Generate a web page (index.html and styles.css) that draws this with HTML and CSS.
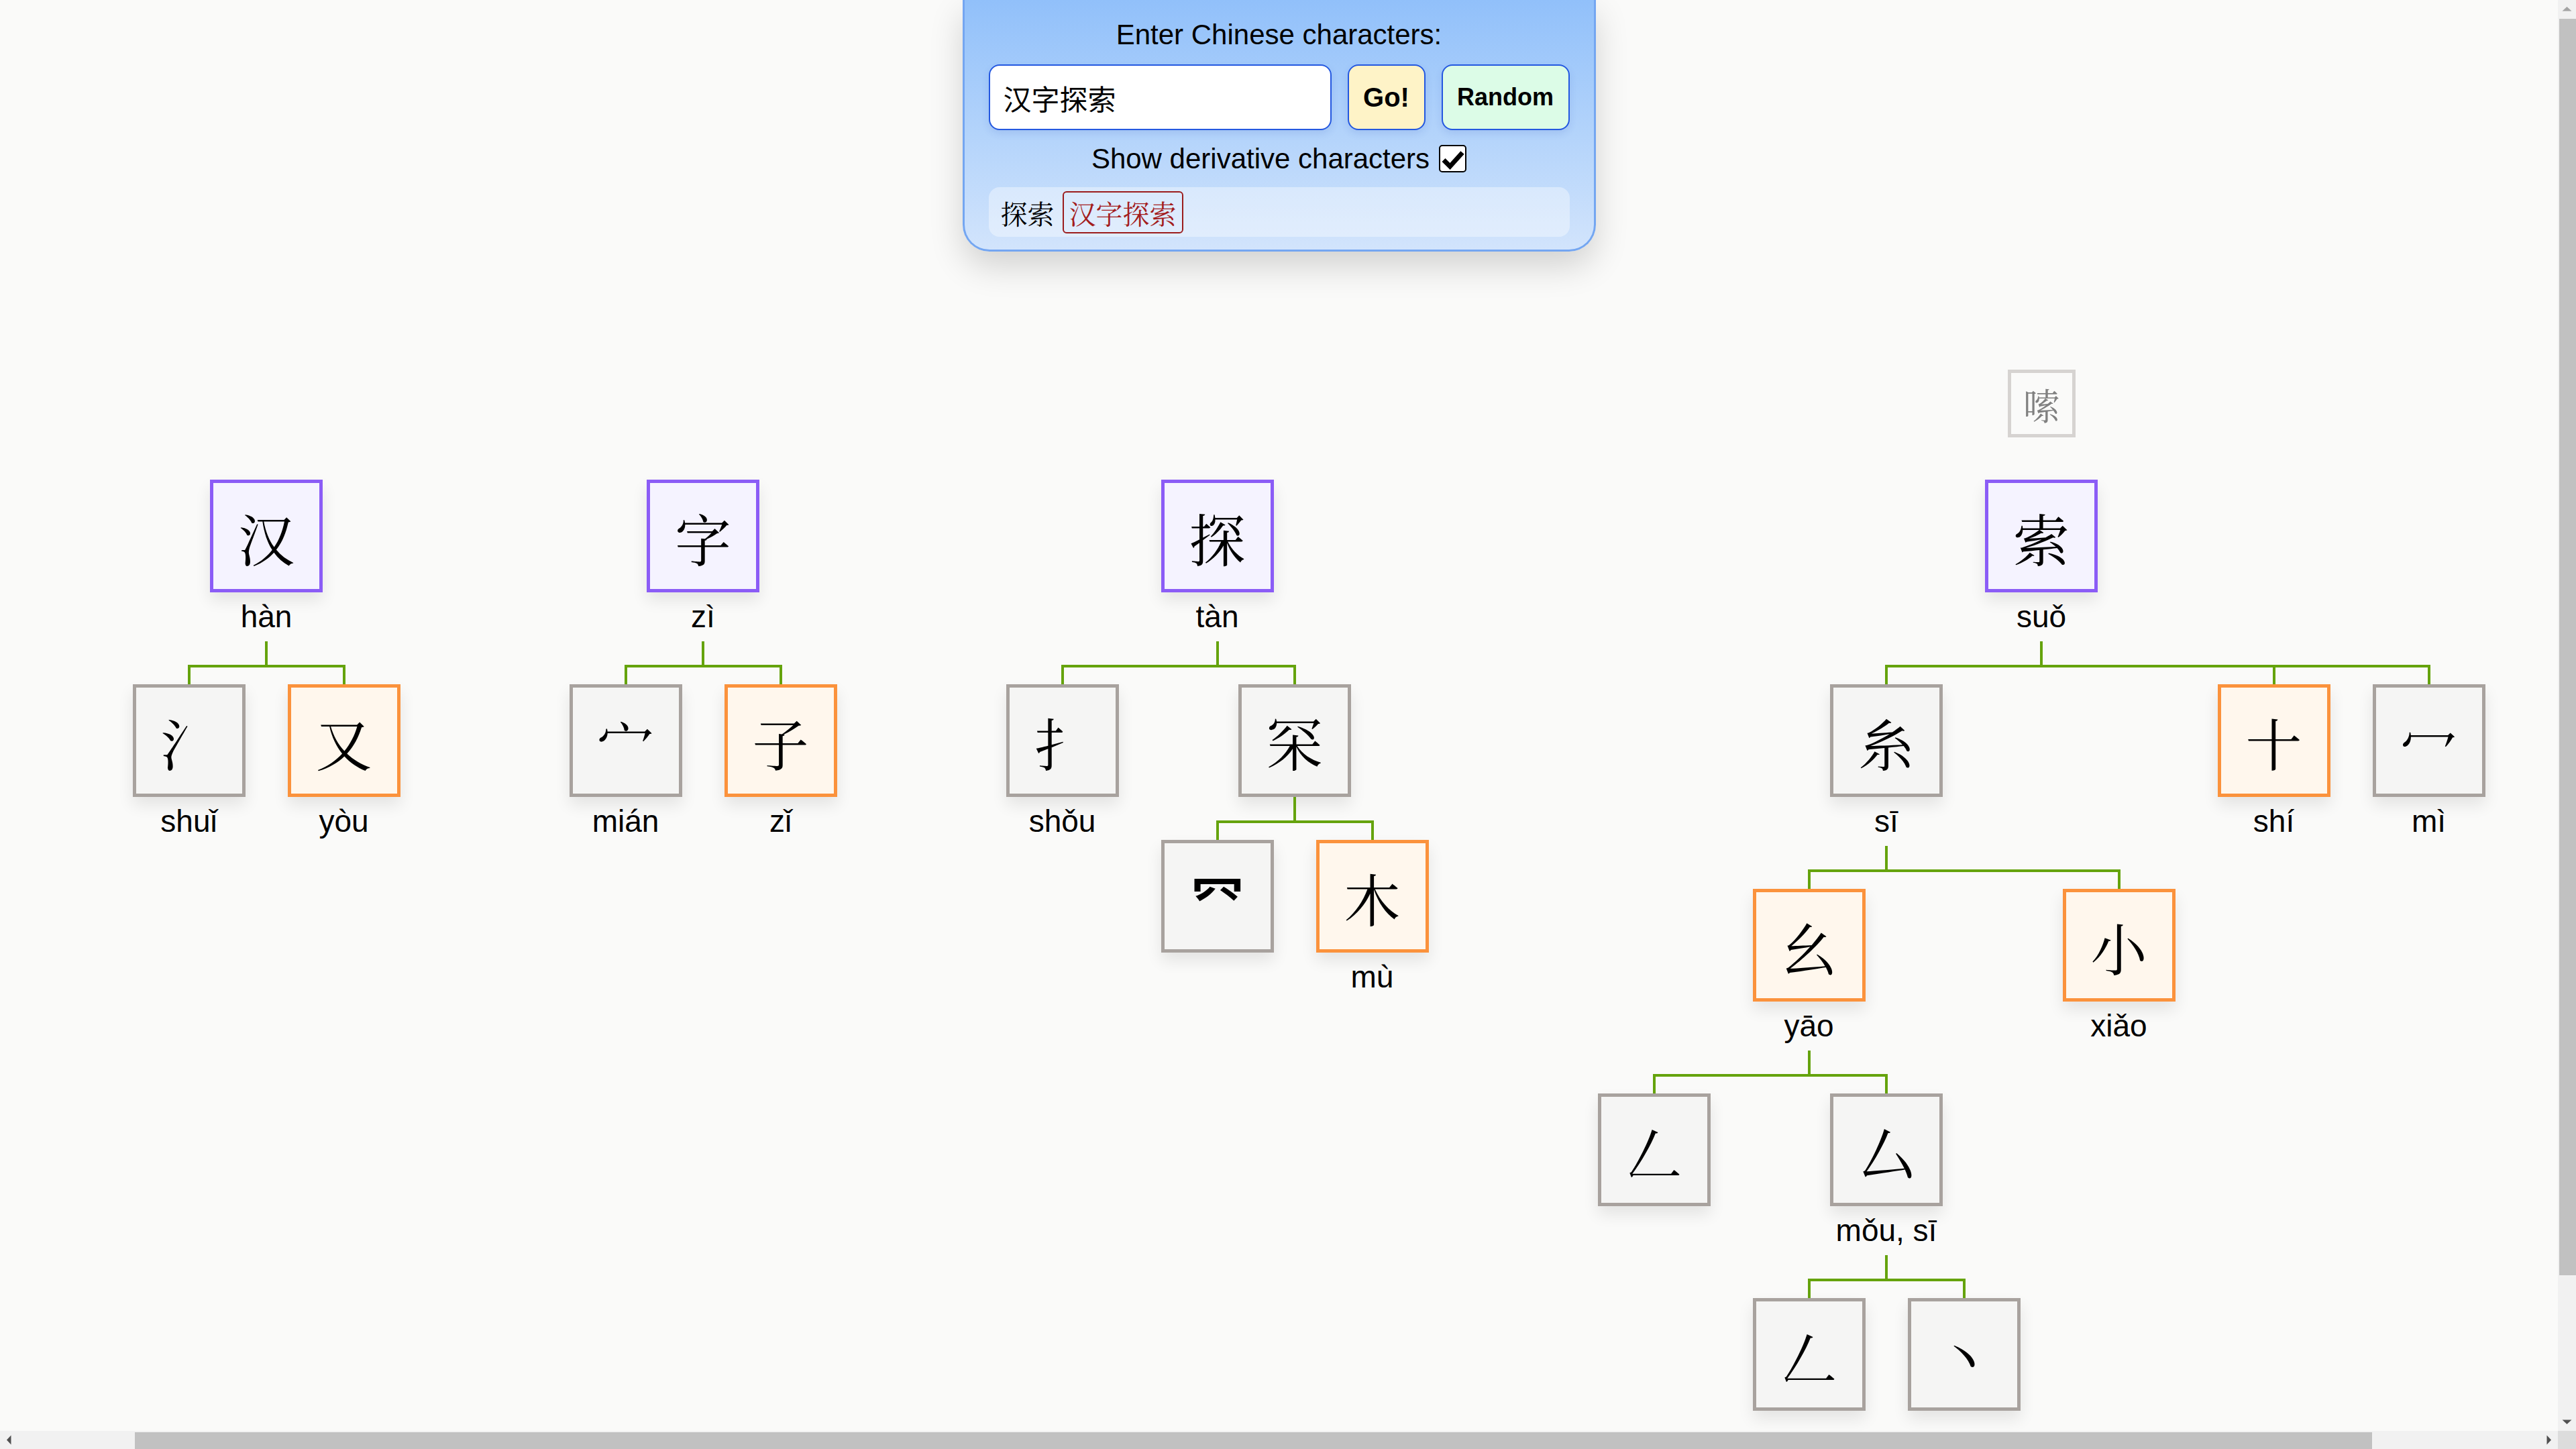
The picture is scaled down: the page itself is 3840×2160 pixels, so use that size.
FILE: index.html
```html
<!DOCTYPE html>
<html lang="zh">
<head>
<meta charset="utf-8">
<title>Chinese character explorer</title>
<link rel="stylesheet" href="styles.css">
</head>
<body>
<div class="window">
  <main class="main">
    <div class="canvas">
      <div class="forest">

        <div class="tree">
          <div class="derivs"></div>
          <div class="node">
            <div class="box top">汉</div>
            <div class="pinyin">hàn</div>
            <div class="kids">
              <div class="node"><div class="box comp">氵</div><div class="pinyin">shuǐ</div></div>
              <div class="node"><div class="box real">又</div><div class="pinyin">yòu</div></div>
            </div>
          </div>
        </div>

        <div class="tree">
          <div class="derivs"></div>
          <div class="node">
            <div class="box top">字</div>
            <div class="pinyin">zì</div>
            <div class="kids">
              <div class="node"><div class="box comp">宀</div><div class="pinyin">mián</div></div>
              <div class="node"><div class="box real">子</div><div class="pinyin">zǐ</div></div>
            </div>
          </div>
        </div>

        <div class="tree">
          <div class="derivs"></div>
          <div class="node">
            <div class="box top">探</div>
            <div class="pinyin">tàn</div>
            <div class="kids">
              <div class="node"><div class="box comp">扌</div><div class="pinyin">shǒu</div></div>
              <div class="node">
                <div class="box comp">罙</div>
                <div class="kids">
                  <div class="node"><div class="box comp radical">⺳</div></div>
                  <div class="node"><div class="box real">木</div><div class="pinyin">mù</div></div>
                </div>
              </div>
            </div>
          </div>
        </div>

        <div class="tree">
          <div class="derivs"><div class="deriv">嗦</div></div>
          <div class="node">
            <div class="box top">索</div>
            <div class="pinyin">suǒ</div>
            <div class="kids">
              <div class="node">
                <div class="box comp">糸</div>
                <div class="pinyin">sī</div>
                <div class="kids">
                  <div class="node">
                    <div class="box real">幺</div>
                    <div class="pinyin">yāo</div>
                    <div class="kids">
                      <div class="node"><div class="box comp">𠃋</div></div>
                      <div class="node">
                        <div class="box comp">厶</div>
                        <div class="pinyin">mǒu, sī</div>
                        <div class="kids">
                          <div class="node"><div class="box comp">𠃋</div></div>
                          <div class="node"><div class="box comp">丶</div></div>
                        </div>
                      </div>
                    </div>
                  </div>
                  <div class="node"><div class="box real">小</div><div class="pinyin">xiǎo</div></div>
                </div>
              </div>
              <div class="node"><div class="box real">十</div><div class="pinyin">shí</div></div>
              <div class="node"><div class="box comp">冖</div><div class="pinyin">mì</div></div>
            </div>
          </div>
        </div>

      </div>
    </div>

    <div class="panel">
      <div class="title">Enter Chinese characters:</div>
      <div class="search-row">
        <input class="search-input" type="text" value="汉字探索">
        <button class="btn btn-go">Go!</button>
        <button class="btn btn-random">Random</button>
      </div>
      <label class="check-row">
        <span>Show derivative characters</span>
        <span class="checkbox"><svg viewBox="0 0 36 36" width="36" height="36"><path d="M4 19.5 L13.5 29 L32 8.5" fill="none" stroke="#000" stroke-width="7" stroke-linejoin="miter"/></svg></span>
      </label>
      <div class="history">
        <span class="history-item">探索</span>
        <span class="history-item current">汉字探索</span>
      </div>
    </div>
  </main>

  <div class="vscroll">
    <div class="sb-btn"><svg width="27" height="27" viewBox="0 0 27 27"><path d="M6.5 16.5h14l-7-6.5z" fill="#a3a3a3"/></svg></div>
    <div class="vtrack"><div class="vthumb"></div></div>
    <div class="sb-btn"><svg width="27" height="27" viewBox="0 0 27 27"><path d="M6.5 10.5h14l-7 6.5z" fill="#505050"/></svg></div>
  </div>

  <div class="hscroll">
    <div class="sb-btn"><svg width="27" height="27" viewBox="0 0 27 27"><path d="M16.5 6.5v14l-6.5-7z" fill="#505050"/></svg></div>
    <div class="htrack"><div class="hthumb"></div></div>
    <div class="sb-btn"><svg width="27" height="27" viewBox="0 0 27 27"><path d="M10.5 6.5v14l6.5-7z" fill="#505050"/></svg></div>
  </div>

  <div class="corner"></div>
</div>
</body>
</html>
```

FILE: styles.css
```css
html, body {
  margin: 0;
  padding: 0;
  height: 100%;
  overflow: hidden;
  background: #fafaf9;
}

body {
  font-family: "Liberation Sans", Arial, "Noto Sans CJK SC", sans-serif;
  color: #000;
}

.window {
  display: grid;
  grid-template-columns: 1fr 27px;
  grid-template-rows: 1fr 27px;
  height: 100vh;
}

.main {
  grid-row: 1;
  grid-column: 1;
  position: relative;
  overflow: hidden;
  background: #fafaf9;
}

/* ---------- fake scrollbars ---------- */
.vscroll {
  grid-row: 1;
  grid-column: 2;
  display: flex;
  flex-direction: column;
  background: #f1f1f1;
}

.hscroll {
  grid-row: 2;
  grid-column: 1;
  display: flex;
  background: #f1f1f1;
}

.corner {
  grid-row: 2;
  grid-column: 2;
  background: #dcdcdc;
}

.sb-btn {
  width: 27px;
  height: 27px;
  flex: none;
}

.sb-btn svg {
  display: block;
}

.vtrack {
  flex: 1;
  display: flex;
  flex-direction: column;
  align-items: flex-end;
}

.vthumb {
  width: 25px;
  height: 1873px;
  margin-top: 1px;
  background: #c1c1c1;
}

.htrack {
  flex: 1;
  display: flex;
  align-items: flex-end;
}

.hthumb {
  width: 3335px;
  height: 25px;
  margin-left: 174px;
  background: #c1c1c1;
}

/* ---------- tree canvas ---------- */
.canvas {
  padding: 551px 0 0 197.5px;
}

.forest {
  display: flex;
  align-items: flex-start;
  gap: 252px;
  width: max-content;
}

.tree {
  display: flex;
  flex-direction: column;
  align-items: center;
}

.derivs {
  height: 164px;
  display: flex;
  justify-content: center;
  align-items: flex-start;
  gap: 20px;
}

.deriv {
  width: 101px;
  height: 101px;
  box-sizing: border-box;
  border: 5px solid #d6d3d1;
  background: #fafaf9;
  color: #808080;
  display: flex;
  align-items: center;
  justify-content: center;
  font-family: "Noto Serif CJK SC", "Noto Serif SC", "Source Han Serif SC", "AR PL UMing CN", "Noto Sans CJK SC", serif;
  font-size: 54px;
  line-height: 1;
  padding-top: 2px;
}

.node {
  display: flex;
  flex-direction: column;
  align-items: center;
}

.box {
  width: 168px;
  height: 168px;
  box-sizing: border-box;
  border: 5px solid #a8a29e;
  background: #f5f5f4;
  display: flex;
  align-items: center;
  justify-content: center;
  font-family: "Noto Serif CJK SC", "Noto Serif SC", "Source Han Serif SC", "AR PL UMing CN", "Noto Sans CJK SC", serif;
  font-size: 84px;
  line-height: 1;
  padding-top: 3px;
  box-shadow: 0 12px 22px rgba(0, 0, 0, 0.09);
}

.box.radical {
  font-family: "Noto Sans CJK SC", sans-serif;
  font-weight: 700;
  font-size: 80px;
  padding-top: 0;
}

.box.top {
  border-color: #8b5cf6;
  background: #f5f3ff;
}

.box.real {
  border-color: #fb923c;
  background: #fff7ed;
}

.box.comp {
  border-color: #a8a29e;
  background: #f5f5f4;
}

.pinyin {
  height: 73px;
  box-sizing: border-box;
  padding-top: 14px;
  font-family: "Liberation Sans", Arial, sans-serif;
  font-size: 46px;
  line-height: 44px;
  white-space: nowrap;
  color: #000;
}

.kids {
  display: flex;
  align-items: flex-start;
  padding-top: 64px;
  margin: 0 -31.5px;
  position: relative;
}

.kids::before {
  content: "";
  position: absolute;
  top: 0;
  left: 50%;
  margin-left: -2px;
  width: 4px;
  height: 39px;
  background: #65a30d;
}

.kids > .node {
  position: relative;
  padding: 0 31.5px;
}

.kids > .node::before {
  content: "";
  position: absolute;
  top: -28px;
  left: 50%;
  margin-left: -2px;
  width: 4px;
  height: 28px;
  background: #65a30d;
}

.kids > .node::after {
  content: "";
  position: absolute;
  top: -29px;
  left: 0;
  right: 0;
  height: 4px;
  background: #65a30d;
}

.kids > .node:first-child::after {
  left: calc(50% - 2px);
}

.kids > .node:last-child::after {
  right: calc(50% - 2px);
}

/* ---------- search panel ---------- */
.panel {
  position: absolute;
  top: 0;
  left: 50%;
  transform: translateX(-50%);
  width: 944px;
  box-sizing: border-box;
  border: 3px solid #74a6f1;
  border-top: none;
  border-radius: 0 0 40px 40px;
  background: linear-gradient(180deg, #91c0fa 0%, #b4d4fb 55%, #d2e4fc 100%);
  padding: 28px 36px 19px;
  display: flex;
  flex-direction: column;
  align-items: center;
  box-shadow: 0 22px 50px rgba(0, 0, 0, 0.16);
  font-family: "Liberation Sans", Arial, sans-serif;
}

.title {
  font-size: 42px;
  line-height: 48px;
  margin-bottom: 20px;
}

.search-row {
  display: flex;
  gap: 24px;
  width: 100%;
  height: 98px;
  margin-bottom: 22px;
}

.search-input {
  flex: 1;
  min-width: 0;
  box-sizing: border-box;
  height: 98px;
  margin: 0;
  border: 2.5px solid #2458e0;
  border-radius: 16px;
  background: #fff;
  padding: 0 20px;
  font-family: "Noto Sans CJK SC", "Liberation Sans", sans-serif;
  font-size: 42px;
  color: #000;
  outline: none;
  box-shadow: 0 5px 12px rgba(30, 64, 175, 0.12);
}

.btn {
  box-sizing: border-box;
  height: 98px;
  margin: 0;
  border: 2.5px solid #2458e0;
  border-radius: 16px;
  font-family: "Liberation Sans", Arial, sans-serif;
  font-weight: bold;
  font-size: 36px;
  color: #000;
  padding: 0;
  box-shadow: 0 5px 12px rgba(30, 64, 175, 0.12);
}

.btn-go {
  width: 116px;
  background: #fef3c7;
  font-size: 40px;
}

.btn-random {
  width: 191px;
  background: #dcfce7;
}

.check-row {
  display: flex;
  align-items: center;
  justify-content: center;
  gap: 14px;
  height: 41px;
  font-size: 42px;
  margin-bottom: 22px;
}

.checkbox {
  width: 41px;
  height: 41px;
  box-sizing: border-box;
  border: 2.5px solid #000;
  border-radius: 5px;
  background: #fff;
  display: flex;
  align-items: center;
  justify-content: center;
}

.checkbox svg {
  display: block;
}

.history {
  width: 100%;
  height: 74px;
  box-sizing: border-box;
  border-radius: 16px;
  background: rgba(255, 255, 255, 0.38);
  display: flex;
  align-items: center;
  gap: 12px;
  padding: 0 18px;
  font-family: "Noto Serif CJK SC", "Noto Serif SC", "Source Han Serif SC", "AR PL UMing CN", "Noto Sans CJK SC", serif;
  font-size: 40px;
}

.history-item {
  white-space: nowrap;
}

.history-item.current {
  box-sizing: border-box;
  height: 63px;
  line-height: 59px;
  padding: 0 8px;
  border: 2px solid #9b1c1c;
  border-radius: 6px;
  color: #a31d1d;
}
```
